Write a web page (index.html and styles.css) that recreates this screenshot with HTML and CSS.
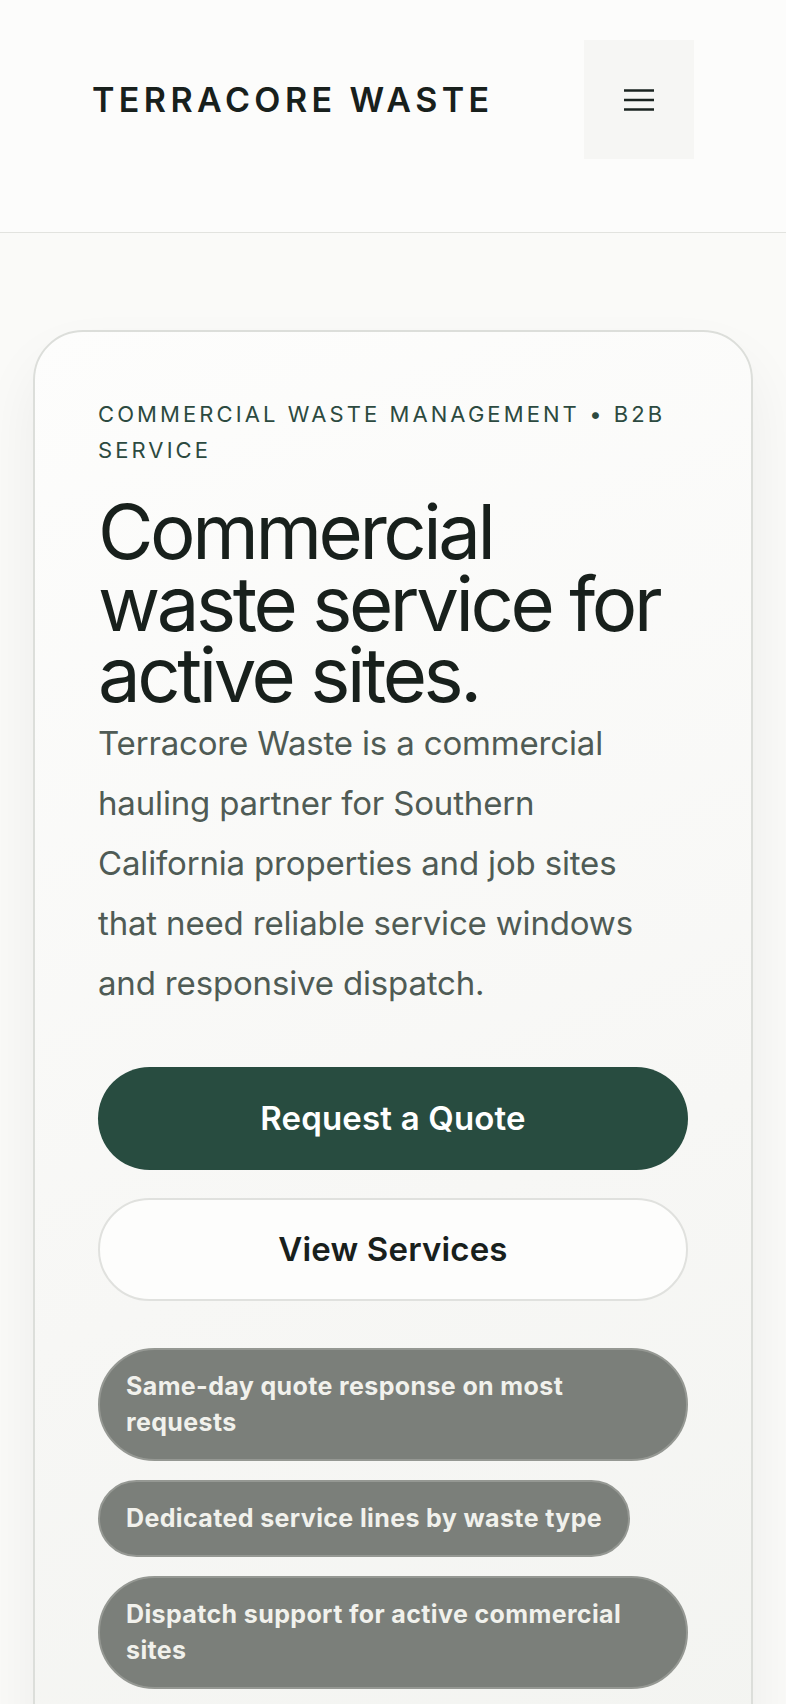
FILE: index.html
```html
<!DOCTYPE html>
<html lang="en">
<head>
    <meta charset="UTF-8">
    <meta name="viewport" content="width=device-width, initial-scale=1.0">
    <title>Terracore Waste</title>
    <link rel="stylesheet" href="styles.css">
</head>
<body>
    <header class="site-header">
        <a class="logo" href="#">TERRACORE WASTE</a>
        <button class="menu-btn" aria-label="Open menu">
            <svg width="30" height="22" viewBox="0 0 30 22" fill="none">
                <path d="M0 1.5h30M0 11h30M0 20.5h30" stroke="#1b2420" stroke-width="2.4"/>
            </svg>
        </button>
    </header>

    <main class="page">
        <section class="hero">
            <p class="eyebrow">Commercial Waste Management • B2B Service</p>
            <h1 class="hero-title">Commercial waste service for active sites.</h1>
            <p class="hero-text">Terracore Waste is a commercial hauling partner for Southern California properties and job sites that need reliable service windows and responsive dispatch.</p>

            <div class="actions">
                <a class="btn btn-primary" href="#">Request a Quote</a>
                <a class="btn btn-secondary" href="#">View Services</a>
            </div>

            <ul class="chips">
                <li class="chip">Same-day quote response on most requests</li>
                <li class="chip">Dedicated service lines by waste type</li>
                <li class="chip">Dispatch support for active commercial sites</li>
            </ul>
        </section>
    </main>
</body>
</html>
```

FILE: styles.css
```css
* {
    box-sizing: border-box;
}
body {
    margin: 0;
    font-family: Inter, "Noto Sans", sans-serif;
    background: #fafaf8;
    color: #18201c;
}
.site-header {
    display: flex;
    justify-content: space-between;
    align-items: center;
    height: 233px;
    padding: 40px 92px 73px;
    background: #fcfcfb;
    border-bottom: 1px solid #e2e3df;
}
.logo {
    font-size: 34px;
    font-weight: 600;
    letter-spacing: 0.13em;
    color: #18201c;
    text-decoration: none;
}
.menu-btn {
    width: 110px;
    height: 119px;
    border: 0;
    background: #f6f6f4;
    display: flex;
    align-items: center;
    justify-content: center;
    padding: 0;
}
.page {
    padding: 97px 33px 0;
}
.hero {
    border: 2px solid #dcdeda;
    border-radius: 50px;
    padding: 64px 63px 80px;
    background: linear-gradient(160deg, #fdfdfc 0%, #f7f7f5 60%, #f3f4f1 100%);
    box-shadow: 0 30px 60px rgba(30, 40, 35, 0.06);
}
.eyebrow {
    margin: 0;
    font-size: 22px;
    line-height: 36px;
    font-weight: 400;
    letter-spacing: 0.14em;
    text-transform: uppercase;
    color: #2c4a40;
}
.hero-title {
    margin: 28px 0 0;
    font-size: 76px;
    line-height: 71.5px;
    font-weight: 400;
    letter-spacing: -0.045em;
    color: #18201c;
}
.hero-text {
    margin: 2px 0 0;
    max-width: 565px;
    font-size: 33px;
    line-height: 60px;
    letter-spacing: -0.005em;
    color: #4f5b55;
}
.actions {
    display: flex;
    flex-direction: column;
    gap: 28px;
    margin-top: 54px;
}
.btn {
    display: flex;
    align-items: center;
    justify-content: center;
    height: 103px;
    border-radius: 52px;
    font-size: 33px;
    font-weight: 600;
    letter-spacing: 0.005em;
    text-decoration: none;
}
.btn-primary {
    background: #284c40;
    color: #ffffff;
}
.btn-secondary {
    background: #fdfdfc;
    border: 2px solid #e0e1de;
    color: #18201c;
}
.chips {
    list-style: none;
    margin: 47px 0 0;
    padding: 0;
    display: flex;
    flex-direction: column;
    align-items: flex-start;
    gap: 19px;
}
.chip {
    background: #7b7f7a;
    border: 2px solid #959893;
    border-radius: 60px;
    padding: 18.5px 26px;
    font-size: 25px;
    line-height: 36px;
    font-weight: 700;
    letter-spacing: 0.015em;
    color: #f1f1ec;
}
```
